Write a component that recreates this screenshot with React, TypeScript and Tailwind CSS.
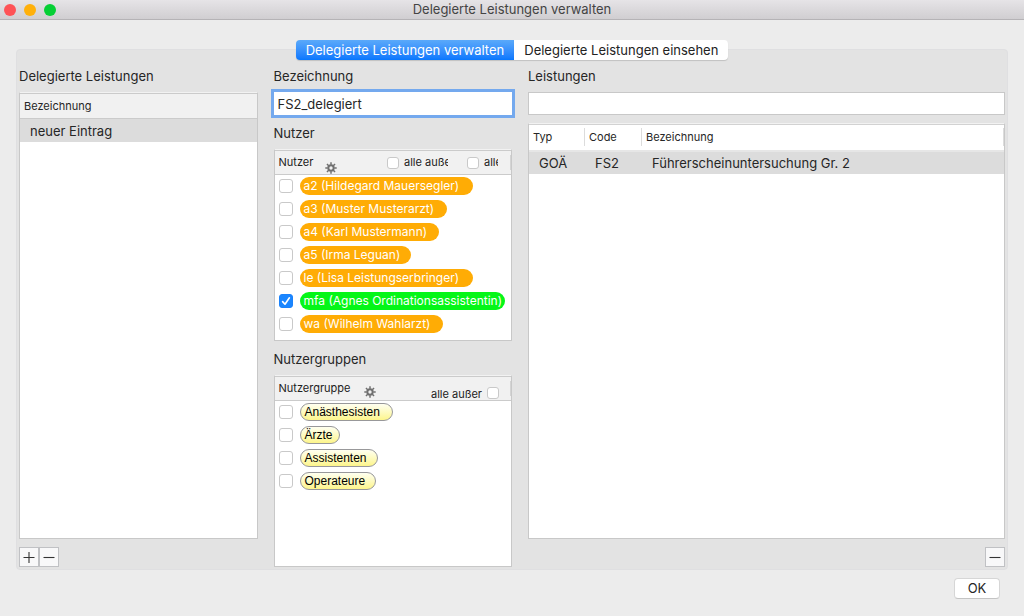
import clsx from "clsx";
import { useState } from "react";

type Entry = { id: string; label: string; width: string };

const USERS: Entry[] = [
	{ id: "a2", label: "a2 (Hildegard Mauersegler)", width: "w-[173px]" },
	{ id: "a3", label: "a3 (Muster Musterarzt)", width: "w-[147px]" },
	{ id: "a4", label: "a4 (Karl Mustermann)", width: "w-[139px]" },
	{ id: "a5", label: "a5 (Irma Leguan)", width: "w-[111px]" },
	{ id: "le", label: "le (Lisa Leistungserbringer)", width: "w-[173px]" },
	{ id: "mfa", label: "mfa (Agnes Ordinationsassistentin)", width: "w-[205px]" },
	{ id: "wa", label: "wa (Wilhelm Wahlarzt)", width: "w-[143px]" },
];

const GROUPS: Entry[] = [
	{ id: "anaesthesisten", label: "Anästhesisten", width: "w-[93px]" },
	{ id: "aerzte", label: "Ärzte", width: "w-[40px]" },
	{ id: "assistenten", label: "Assistenten", width: "w-[78px]" },
	{ id: "operateure", label: "Operateure", width: "w-[76px]" },
];

const SERVICES = [{ type: "GOÄ", code: "FS2", name: "Führerscheinuntersuchung Gr. 2" }];

const TABS = ["Delegierte Leistungen verwalten", "Delegierte Leistungen einsehen"];

const Checkbox = ({ small, ...props }: { small?: boolean } & React.ComponentProps<"input">) => (
	<span className="grid shrink-0 place-items-center">
		<input
			type="checkbox"
			className={clsx(
				"peer col-start-1 row-start-1 appearance-none rounded-[3px] border border-[#c9c9c9] bg-white checked:border-[#1a82fb] checked:bg-[#1a86ff]",
				small ? "size-3" : "size-3.5",
			)}
			{...props}
		/>
		<svg
			viewBox="0 0 14 14"
			className="pointer-events-none invisible col-start-1 row-start-1 size-3.5 peer-checked:visible"
			fill="none"
			stroke="white"
			strokeWidth="1.6"
			strokeLinecap="round"
			strokeLinejoin="round"
		>
			<path d="M3.6 7.6 6 10.2 10.4 3.8" />
		</svg>
	</span>
);

const GearButton = ({ label }: { label: string }) => (
	<button type="button" aria-label={label} className="shrink-0">
		<svg viewBox="0 0 12 12" className="size-3 text-[#707070]" fill="none" stroke="currentColor">
			<circle cx="6" cy="6" r="2.7" strokeWidth="2" />
			{[0, 45, 90, 135, 180, 225, 270, 315].map(angle => (
				<path key={angle} d="M6 2.7V.3" strokeWidth="1.5" transform={`rotate(${angle} 6 6)`} />
			))}
		</svg>
	</button>
);

const SquareButton = ({ label, icon }: { label: string; icon: "plus" | "minus" }) => (
	<button
		type="button"
		aria-label={label}
		className="grid size-5 place-items-center border border-[#c0c1c4] bg-[#f8f8f9] text-[#333]"
	>
		<svg viewBox="0 0 12 12" className="size-3" fill="none" stroke="currentColor" strokeWidth="1.1">
			<path d={icon === "plus" ? "M.5 6.5h11M6 1v11" : "M.5 6.5h11"} />
		</svg>
	</button>
);

const ListBox = ({ header, children }: { header: React.ReactNode; children: React.ReactNode }) => (
	<div className="min-h-48 flex-1 border border-[#c8c8c8] border-t-[#f2f2f2] bg-white">
		<div className="flex h-[25px] border-y border-[#cbcbcb] bg-[#f1f1f1] pl-1 text-[11px] text-[#222]">
			{header}
			<span className="my-1 border-r border-[#d4d4d4]" />
		</div>
		<ul className="-mt-px">{children}</ul>
	</div>
);

const LABEL = "block h-[17px] text-[13px] leading-[19px] text-[#262626]";

export default function App() {
	const [tab, setTab] = useState(0);
	const [name, setName] = useState("FS2_delegiert");
	const [selected, setSelected] = useState<string[]>(["mfa"]);

	const toggle = (id: string) =>
		setSelected(current => (current.includes(id) ? current.filter(x => x !== id) : [...current, id]));

	return (
		<div className="flex min-h-screen flex-col bg-[#ececec] font-['Inter',sans-serif] text-[13px] text-[#262626]">
			<header className="grid h-5 grid-cols-[1fr_auto_1fr] items-center border-b border-[#b5b3b6] bg-linear-to-b from-[#e6e4e7] to-[#d0ced1]">
				<div className="flex gap-2 pl-1">
					<span className="size-3 rounded-full bg-[#fe5256]" />
					<span className="size-3 rounded-full bg-[#ffb00b]" />
					<span className="size-3 rounded-full bg-[#06cf35]" />
				</div>
				<h1 className="text-[#444]">Delegierte Leistungen verwalten</h1>
			</header>

			<main className="flex flex-1 flex-col px-4 pt-5">
				<div role="tablist" className="z-10 flex justify-center">
					{TABS.map((label, index) => (
						<button
							key={label}
							type="button"
							role="tab"
							aria-selected={tab === index}
							onClick={() => setTab(index)}
							className={clsx(
								"h-5 px-2.5 leading-5 shadow-[0_1px_1px_rgba(0,0,0,0.15)] first:rounded-l-[4px] last:rounded-r-[4px]",
								tab === index
									? "bg-linear-to-b from-[#5aa9fa] to-[#0677fe] text-white"
									: "bg-white text-[#222]",
							)}
						>
							{label}
						</button>
					))}
				</div>

				<div className="-mt-[11px] grid flex-1 grid-cols-[1fr_1fr_2fr] gap-4 rounded-[4px] border border-[#dfdfe1] bg-[#e3e3e3] px-0.5 pt-[17px] pb-0.5">
					<section className="flex min-w-0 flex-col">
						<h2 className={LABEL}>Delegierte Leistungen</h2>
						<div className="mt-2 flex-1 border border-[#c8c8c8] border-t-[#f2f2f2] bg-white">
							<table className="w-full border-collapse text-left">
								<thead>
									<tr className="h-[25px] border-y border-[#cbcbcb] bg-[#f1f1f1]">
										<th className="pl-1 text-[11px] font-normal">Bezeichnung</th>
									</tr>
								</thead>
								<tbody>
									<tr className="h-[23px] bg-[#dcdcdc]">
										<td className="pt-0.5 pl-2.5">neuer Eintrag</td>
									</tr>
								</tbody>
							</table>
						</div>
						<div className="mt-2 flex">
							<SquareButton label="Eintrag hinzufügen" icon="plus" />
							<SquareButton label="Eintrag entfernen" icon="minus" />
						</div>
					</section>

					<section className="flex min-w-0 flex-col">
						<label htmlFor="name" className={LABEL}>
							Bezeichnung
						</label>
						<input
							id="name"
							type="text"
							value={name}
							onChange={e => setName(e.target.value)}
							className="mt-2 h-[23px] w-full bg-white px-1 ring-3 ring-[#74a9ee] outline-none"
						/>

						<h2 className={clsx(LABEL, "mt-[9px] mb-2")}>Nutzer</h2>
						<ListBox
							header={
								<>
									<span className="w-[46px] leading-[23px]">Nutzer</span>
									<span className="flex items-end">
										<GearButton label="Nutzer einstellen" />
									</span>
									<label className="ml-auto flex w-[62px] items-center gap-1 overflow-hidden whitespace-nowrap">
										<Checkbox small />
										alle außer
									</label>
									<label className="mr-3 ml-[18px] flex w-8 items-center gap-1 overflow-hidden whitespace-nowrap">
										<Checkbox small />
										alle
									</label>
								</>
							}
						>
							{USERS.map(user => (
								<li key={user.id}>
									<label className="flex h-[23px] items-center gap-[7px] pl-1">
										<Checkbox checked={selected.includes(user.id)} onChange={() => toggle(user.id)} />
										<span
											className={clsx(
												"h-[18px] rounded-full pl-1 text-xs leading-[18px] whitespace-nowrap text-white",
												user.width,
												selected.includes(user.id) ? "bg-[#05f618]" : "bg-[#ffac05]",
											)}
										>
											{user.label}
										</span>
									</label>
								</li>
							))}
						</ListBox>

						<h2 className={clsx(LABEL, "mt-[9px] mb-2")}>Nutzergruppen</h2>
						<ListBox
							header={
								<>
									<span className="w-[85px] leading-[23px]">Nutzergruppe</span>
									<span className="flex items-end pb-0.5">
										<GearButton label="Nutzergruppen einstellen" />
									</span>
									<label className="mr-2.5 ml-auto flex items-end gap-1 leading-3">
										alle außer
										<Checkbox small />
									</label>
								</>
							}
						>
							{GROUPS.map(group => (
								<li key={group.id}>
									<label className="flex h-[23px] items-center gap-[7px] pl-1">
										<Checkbox checked={selected.includes(group.id)} onChange={() => toggle(group.id)} />
										<span
											className={clsx(
												"h-[18px] rounded-full border border-[#98989a] bg-linear-to-b from-[#fffff0] to-[#fdf58a] pl-1 font-['Liberation_Sans',sans-serif] text-xs leading-4 whitespace-nowrap text-black",
												group.width,
											)}
										>
											{group.label}
										</span>
									</label>
								</li>
							))}
						</ListBox>
					</section>

					<section className="flex min-w-0 flex-col">
						<label htmlFor="search" className={LABEL}>
							Leistungen
						</label>
						<input
							id="search"
							type="text"
							className="mt-2 h-[23px] w-full border border-[#c8c8c8] bg-white px-1 outline-none"
						/>
						<div className="mt-2 flex-1 border border-[#c8c8c8] border-t-[#f2f2f2] bg-white">
							<table className="w-full table-fixed border-collapse text-left">
								<thead>
									<tr className="h-[26px] border-t border-b-2 border-t-[#d2d2d2] border-b-[#e6e6e6] text-[11px]">
										<th className="w-14 pl-1 font-normal">
											<div className="border-r border-[#dcdcdc] leading-[18px]">Typ</div>
										</th>
										<th className="w-[57px] pl-1 font-normal">
											<div className="border-r border-[#dcdcdc] leading-[18px]">Code</div>
										</th>
										<th className="pl-1 font-normal">
											<div className="border-r border-[#dcdcdc] leading-[18px]">Bezeichnung</div>
										</th>
									</tr>
								</thead>
								<tbody>
									{SERVICES.map(service => (
										<tr key={service.code} className="h-[23px] bg-[#dcdcdc]">
											<td className="pt-0.5 pl-2.5">{service.type}</td>
											<td className="pt-0.5 pl-2.5">{service.code}</td>
											<td className="pt-0.5 pl-2.5">{service.name}</td>
										</tr>
									))}
								</tbody>
							</table>
						</div>
						<div className="mt-2 flex justify-end">
							<SquareButton label="Leistung entfernen" icon="minus" />
						</div>
					</section>
				</div>
			</main>

			<footer className="flex justify-end px-6 pt-2 pb-[17px]">
				<button
					type="button"
					className="h-[21px] w-[46px] rounded-[4px] border border-[#d6d6d6] border-b-[#c4c4c4] bg-white leading-[19px]"
				>
					OK
				</button>
			</footer>
		</div>
	);
}
